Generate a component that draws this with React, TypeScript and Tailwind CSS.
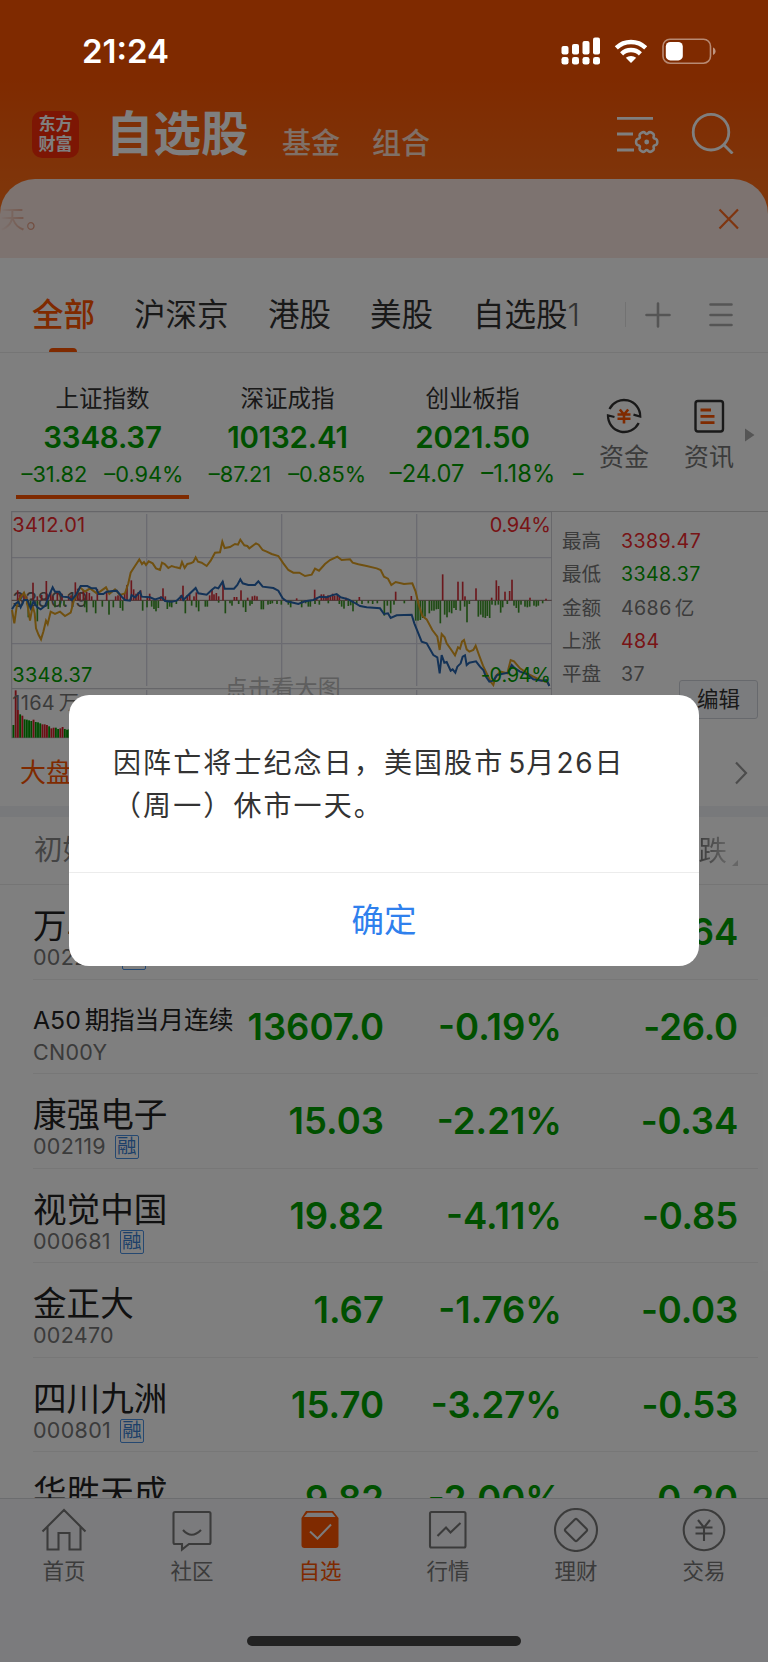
import React from 'react';

const indices = [
  { name: '上证指数', value: '3348.37', diff: '–31.82', pct: '–0.94%', active: true },
  { name: '深证成指', value: '10132.41', diff: '–87.21', pct: '–0.85%', active: false },
  { name: '创业板指', value: '2021.50', diff: '–24.07', pct: '–1.18%', active: false, large: true }
];

const stats = [
  { label: '最高', value: '3389.47', color: 'text-[#f0282d]' },
  { label: '最低', value: '3348.37', color: 'text-[#00a000]' },
  { label: '金额', value: '4686', unit: '亿', color: 'text-[#777777]' },
  { label: '上涨', value: '484', color: 'text-[#f0282d]' },
  { label: '平盘', value: '37', color: 'text-[#777777]' }
];

const stocks = [
  { name: '万马股份', code: '002276', margin: true, price: '', pct: '', change: '-0.64' },
  { name: 'A50', suffix: '期指当月连续', code: 'CN00Y', margin: false, price: '13607.0', pct: '-0.19%', change: '-26.0' },
  { name: '康强电子', code: '002119', margin: true, price: '15.03', pct: '-2.21%', change: '-0.34' },
  { name: '视觉中国', code: '000681', margin: true, price: '19.82', pct: '-4.11%', change: '-0.85' },
  { name: '金正大', code: '002470', margin: false, price: '1.67', pct: '-1.76%', change: '-0.03' },
  { name: '四川九洲', code: '000801', margin: true, price: '15.70', pct: '-3.27%', change: '-0.53' },
  { name: '华胜天成', code: '600410', margin: true, price: '9.82', pct: '-2.00%', change: '-0.20' }
];

// [x, height] pairs, drawn up (rises) or down (falls) from the zero line
const rises = [
  [53, 30], [60, 18], [72, 22], [80, 12], [99, 53], [112, 12], [125, 16], [139, 58], [152, 25], [159, 12], [172, 22], [186, 20],
  [206, 14], [213, 15], [226, 54], [233, 35], [240, 22], [250, 30], [260, 25], [268, 22], [275, 12], [292, 34], [320, 26], [347, 12],
  [354, 15], [361, 15], [374, 20], [381, 46], [394, 60], [401, 33], [408, 20], [415, 25], [422, 30], [442, 8], [449, 20], [482, 12],
  [489, 36], [496, 12], [542, 15], [549, 44], [562, 16], [569, 18], [582, 12], [589, 24], [629, 15], [636, 32], [642, 18], [649, 22],
  [656, 12], [669, 57], [703, 10], [710, 10], [723, 30], [743, 8], [757, 12], [764, 14], [771, 12], [890, 6], [944, 32], [950, 8],
  [964, 18], [971, 18], [978, 12], [984, 15], [991, 12], [998, 20], [1004, 14], [1012, 18], [1018, 12], [1038, 8], [1078, 10],
  [1187, 26], [1234, 13], [1328, 78], [1374, 56], [1388, 56], [1395, 12], [1428, 36], [1475, 8], [1489, 60], [1496, 43], [1515, 26],
  [1529, 28], [1536, 62], [1590, 8], [1638, 5]
];

const falls = [
  [85, 50], [92, 25], [112, 62], [145, 25], [165, 20], [180, 20], [192, 15], [254, 20], [260, 35], [280, 20], [287, 38], [307, 18],
  [327, 42], [340, 20], [361, 22], [368, 30], [428, 30], [441, 20], [455, 18], [462, 25], [468, 32], [475, 22], [502, 25], [509, 18],
  [515, 20], [529, 10], [556, 38], [575, 15], [589, 20], [596, 32], [616, 18], [622, 18], [656, 6], [676, 38], [690, 8], [696, 15],
  [716, 10], [730, 20], [737, 34], [750, 15], [756, 10], [784, 26], [790, 26], [804, 12], [811, 10], [817, 8], [831, 10], [844, 12],
  [865, 12], [872, 20], [905, 20], [917, 8], [925, 18], [931, 18], [945, 10], [958, 12], [985, 8], [1018, 10], [1025, 18], [1032, 24],
  [1045, 16], [1052, 14], [1059, 32], [1070, 10], [1086, 10], [1105, 8], [1118, 10], [1132, 8], [1153, 45], [1162, 15], [1172, 38],
  [1182, 12], [1213, 8], [1247, 60], [1254, 60], [1261, 58], [1268, 52], [1275, 48], [1288, 38], [1295, 30], [1302, 30], [1309, 26],
  [1315, 25], [1321, 68], [1334, 42], [1341, 50], [1348, 35], [1355, 38], [1362, 22], [1368, 28], [1381, 30], [1394, 18], [1401, 65],
  [1408, 10], [1435, 48], [1442, 42], [1449, 50], [1456, 52], [1462, 46], [1469, 52], [1476, 12], [1486, 14], [1495, 12], [1502, 36],
  [1508, 20], [1522, 10], [1542, 15], [1549, 22], [1556, 36], [1563, 12], [1575, 18], [1582, 20], [1589, 18], [1602, 15], [1609, 18],
  [1615, 15], [1628, 8]
];

// [height, up] pairs
const volumes = [
  [38, 0], [142, 1], [83, 1], [70, 0], [66, 1], [55, 0], [54, 0], [52, 0], [50, 0], [54, 1], [47, 0], [46, 0], [43, 0],
  [40, 1], [40, 1], [38, 1], [34, 0], [28, 1], [30, 1], [30, 0], [26, 0], [28, 1], [32, 1], [26, 0], [24, 0], [25, 0], [24, 1], [22, 0]
];

const yellowLine =
  '36,330 43,370 50,320 60,295 72,278 80,300 90,362 98,318 104,340 108,385 116,405 123,418 130,395 138,362 143,372 152,335 165,342 180,335 195,348 212,338 222,300 240,262 255,275 270,265 290,280 300,275 318,262 328,282 345,268 360,285 375,280 385,250 392,218 405,198 418,178 426,192 432,186 438,195 446,184 458,190 468,205 480,210 486,188 494,192 505,204 515,198 528,202 540,205 546,186 554,204 562,192 572,190 580,186 587,172 594,185 605,188 620,198 632,182 645,158 660,157 667,125 674,144 690,141 705,132 714,134 721,119 733,136 742,138 748,145 768,130 776,134 788,150 800,155 815,162 835,168 850,190 865,210 880,218 898,218 915,228 935,224 945,206 957,212 975,192 990,180 1012,170 1025,180 1050,178 1058,188 1075,193 1100,198 1130,205 1142,210 1152,230 1164,236 1174,255 1187,246 1212,252 1237,250 1247,275 1255,310 1267,348 1280,358 1297,390 1312,410 1319,450 1325,402 1334,412 1340,430 1352,447 1365,466 1374,442 1380,446 1386,425 1392,420 1400,448 1408,455 1420,450 1427,437 1437,465 1449,497 1460,520 1472,545 1480,555 1487,528 1502,515 1522,520 1532,480 1542,484 1560,505 1590,525 1620,540 1640,545 1648,555';

const blueLine =
  '36,328 46,312 55,305 62,322 72,300 82,300 92,325 100,305 112,322 122,328 135,318 145,292 158,262 165,275 178,275 188,290 205,292 215,300 228,285 242,258 262,258 275,265 288,265 296,282 310,282 320,275 350,272 365,290 375,300 390,302 395,285 405,292 420,275 425,290 450,292 465,298 485,292 495,303 515,305 530,302 545,288 550,300 565,285 587,264 595,280 620,284 635,270 645,262 655,265 668,245 674,266 702,266 712,255 721,238 728,250 745,255 765,255 775,244 788,260 820,264 835,272 848,295 860,304 880,308 895,312 915,304 940,300 960,290 980,292 995,286 1010,282 1022,292 1045,298 1060,306 1080,318 1100,322 1140,325 1152,342 1164,340 1172,354 1190,346 1235,344 1243,370 1265,425 1280,430 1300,465 1312,472 1319,520 1325,465 1333,488 1340,486 1352,512 1358,508 1366,518 1372,500 1382,490 1388,470 1395,466 1400,495 1408,488 1428,484 1440,500 1450,510 1458,530 1468,545 1480,542 1492,525 1505,522 1525,518 1535,495 1545,505 1560,515 1580,522 1600,538 1625,542 1640,540 1648,558';

// closed six-lobed outline, smoothed through the midpoints of its control polygon
function gearPath(cx: number, cy: number) {
  const pts: number[][] = [];
  for (let i = 0; i < 6; i++) {
    [[-15, 11], [15, 11], [30, 7.2]].forEach(([deg, r]) => {
      const a = ((i * 60 + deg) * Math.PI) / 180;
      pts.push([cx + r * Math.cos(a), cy + r * Math.sin(a)]);
    });
  }
  const mid = (i: number) => {
    const a = pts[i % pts.length];
    const b = pts[(i + 1) % pts.length];
    return `${((a[0] + b[0]) / 2).toFixed(2)} ${((a[1] + b[1]) / 2).toFixed(2)}`;
  };
  return `M${mid(pts.length - 1)}` + pts.map((p, i) => `Q${p[0].toFixed(2)} ${p[1].toFixed(2)} ${mid(i)}`).join('') + 'z';
}

function StatusBar() {
  return (
    <div className="absolute inset-x-0 top-0 z-20 flex h-[102px] items-center justify-between pl-[82px] pr-[52px] text-white">
      <span className="text-[33px] font-semibold leading-none">21:24</span>
      <svg className="h-8 w-[156px]" viewBox="0 0 156 32">
        <g fill="#fff">
          <rect x="1.5" y="11" width="7" height="8.5" rx="2" />
          <rect x="12" y="9" width="7" height="10.5" rx="2" />
          <rect x="22.5" y="6" width="7" height="13.5" rx="2" />
          <rect x="33" y="2.5" width="7" height="17" rx="2" />
          <rect x="1.5" y="22" width="7" height="7.5" rx="2.3" />
          <rect x="12" y="22" width="7" height="7.5" rx="2.3" />
          <rect x="22.5" y="22" width="7" height="7.5" rx="2.3" />
          <rect x="33" y="22" width="7" height="7.5" rx="2.3" />
          <path d="M71 28l-5.2-5.2a8 8 0 0 1 10.4 0z" />
        </g>
        <g fill="none" stroke="#fff" strokeWidth="4.4">
          <path d="M56.3 12.9a21.3 21.3 0 0 1 29.4 0" />
          <path d="M61.6 18.8a13.5 13.5 0 0 1 18.8 0" />
        </g>
        <rect x="103" y="4.2" width="47.5" height="24" rx="7" fill="none" stroke="#fff" strokeOpacity="0.45" strokeWidth="1.6" />
        <rect x="105.8" y="7" width="17" height="18.4" rx="4.5" fill="#fff" />
        <path d="M153 12.5c3.4 1.2 3.4 6.2 0 7.4z" fill="#fff" fillOpacity="0.5" />
      </svg>
    </div>
  );
}

function Header() {
  return (
    <header className="flex h-[214px] items-start bg-linear-to-b from-[#fe5400] from-35% to-[#fe7018] pl-8 pt-[110px] text-white">
      <div className="mt-px flex h-[47px] w-[47px] flex-col items-center justify-center rounded-[10px] bg-[#fa2c08] text-[17px] font-bold leading-[19.5px]">
        <span>东方</span>
        <span>财富</span>
      </div>
      <h1 className="ml-[27px] w-[150px] whitespace-nowrap text-[47.5px] font-bold leading-[48px]">自选股</h1>
      <span className="ml-[26px] mt-[18px] text-[29px] font-medium leading-8 text-white/80">基金</span>
      <span className="ml-[32px] mt-[18px] text-[29px] font-medium leading-8 text-white/80">组合</span>
      <svg className="ml-[187px] h-[44px] w-[120px]" viewBox="0 0 120 44" fill="none" stroke="#fff" strokeWidth="2.8">
        <path d="M0 8.3h36M0 24h16M0 40h17" />
        <path d={gearPath(29.7, 32)} strokeWidth="2.5" />
        <circle cx="29.7" cy="32" r="2.4" fill="#fff" stroke="none" />
        <circle cx="94" cy="22.2" r="17.8" />
        <path d="M106.500 34.5l9 9" />
      </svg>
    </header>
  );
}

function Tabs() {
  return (
    <nav className="flex h-[95px] items-center border-b border-[#ebebeb] pt-[19px] pl-[32px] text-[31.5px] leading-none text-[#333]">
      <div className="relative flex h-full w-[63px] items-center font-medium text-[#fe5400]">
        全部
        <div className="absolute bottom-0 left-[17px] h-1 w-7 rounded-t bg-[#fe5400]"></div>
      </div>
      <span className="ml-[39px] w-[94px] whitespace-nowrap">沪深京</span>
      <span className="ml-[40px] w-[63px] whitespace-nowrap">港股</span>
      <span className="ml-[39px] w-[63px] whitespace-nowrap">美股</span>
      <span className="ml-[40px] w-[112px] whitespace-nowrap">自选股<span className="text-[#666] font-light">1</span></span>
      <div className="ml-[40px] h-[25px] w-px bg-[#e4e4e4]"></div>
      <svg className="ml-[19px] h-7 w-[90px]" viewBox="0 0 90 28" fill="none" stroke="#aaa" strokeWidth="2.6" strokeLinecap="round">
        <path d="M1.5 14h23M13 2.5v23M65.5 3.5h21M65.5 14h21M65.5 24h21" />
      </svg>
    </nav>
  );
}

function IndexStrip() {
  return (
    <section className="flex h-[158px]">
      <div className="flex w-[586px] overflow-hidden pl-[10px]">
        {indices.map((item) => (
          <div key={item.name} className="relative flex w-[185px] shrink-0 flex-col items-center pt-[34px]">
            <span className="text-[23.5px] leading-6 text-[#333]">{item.name}</span>
            <span className="mt-[12px] text-[29.5px] font-semibold leading-7 tracking-[-0.2px] text-[#00a000]">{item.value}</span>
            <div
              className={`mt-[11px] flex gap-[17px] whitespace-nowrap leading-6 text-[#00a000] ${item.large ? 'text-[23.7px]' : 'text-[21.8px]'}`}
            >
              <span>{item.diff}</span>
              <span>{item.pct}</span>
            </div>
            {item.active && <div className="absolute left-[6px] top-[142px] h-1 w-[173px] bg-[#fe5400]"></div>}
          </div>
        ))}
        <span className="ml-[8px] mt-[109px] text-[21px] leading-6 text-[#00a000]">–</span>
      </div>
      <div className="flex pt-[42px] text-[25px] leading-7 text-[#777]">
        <div className="ml-[13px] flex w-[50px] flex-col items-center whitespace-nowrap">
          <svg className="h-[42px] w-[42px]" viewBox="0 0 42 42" fill="none" stroke="#333" strokeWidth="2.3">
            <path d="M6.5 14A16.2 16.2 0 0 1 37.2 21.5L30.5 19.6" />
            <path d="M35.7 28A16.2 16.2 0 0 1 5 20.5L11.5 22" />
            <g stroke="#fe5400" strokeWidth="2.6">
              <path d="M16.8 14.5l4.2 5 4.2-5M14.5 19.5h13M14.5 23.8h13M21 19.5v9" />
            </g>
          </svg>
          <span className="mt-[6px]">资金</span>
        </div>
        <div className="ml-[35px] flex w-[50px] flex-col items-center whitespace-nowrap">
          <svg className="h-[42px] w-[42px]" viewBox="0 0 42 42" fill="none" stroke="#333" strokeWidth="2.4">
            <rect x="7.5" y="6" width="27.5" height="30.5" rx="2.5" />
            <path d="M12.5 15h10.5M12.5 21.3h14M12.5 27.7h14" stroke="#fe5400" strokeWidth="2.8" />
          </svg>
          <span className="mt-[6px]">资讯</span>
        </div>
        <svg className="ml-[11px] mt-[33px] h-[14px] w-[10px]" viewBox="0 0 10 14" fill="#aaa">
          <path d="M0 0.5l9.5 6.5-9.5 6.5z" />
        </svg>
      </div>
    </section>
  );
}

function Chart() {
  return (
    <section className="flex h-[228px]">
      <svg className="ml-[11px] h-[228px] w-[541px] shrink-0" viewBox="33 33 1623 684">
        <g fill="none" stroke="#d6d6e2" strokeWidth="4">
          <path d="M35 173H1655M35 431H1655M440 42V558M845 42V558M1250 42V558M440 570V713M845 570V713M1250 570V713" />
        </g>
        <path d="M35 35H1655V713H35zM35 566H1655" fill="none" stroke="#cdcdd3" strokeWidth="3.5" />
        <g fontSize="60" letterSpacing="0.8">
          <text x="37" y="321" fill="#666">3380.19</text>
          <text x="674" y="587" fill="#bdbdbd" fontSize="69">点击看大图</text>
        </g>
        <path d="M35 301H1655" stroke="#8a6a6a" strokeWidth="3" />
        {rises.map(([x, h]) => (
          <rect key={x} x={x - 2.5} y={301 - h} width="5" height={h} fill="#d6303a" />
        ))}
        {falls.map(([x, h]) => (
          <rect key={x} x={x - 2.5} y="302" width="5" height={h} fill="#3c9628" />
        ))}
        {volumes.map(([h, up], i) => (
          <rect key={i} x={37.5 + i * 6.7} y={713 - h} width="5.6" height={h} fill={up ? '#d6202a' : '#009600'} />
        ))}
        <polyline points={yellowLine} fill="none" stroke="#e0a020" strokeWidth="6" />
        <polyline points={blueLine} fill="none" stroke="#2664ae" strokeWidth="6" />
        <g fontSize="60" letterSpacing="0.8">
          <text x="37" y="97" fill="#f0282d">3412.01</text>
          <text x="1652" y="97" fill="#f0282d" textAnchor="end" letterSpacing="-1">0.94%</text>
          <text x="37" y="545" fill="#00a000">3348.37</text>
          <text x="1652" y="545" fill="#00a000" textAnchor="end" letterSpacing="-1">-0.94%</text>
          <text x="37" y="629" fill="#777">1164</text>
          <text x="176" y="629" fill="#777">万</text>
        </g>
      </svg>
      <div className="relative flex-1 border-t border-[#d2d2d2] pt-[13px] pl-[10px]">
        {stats.map((item) => (
          <div key={item.label} className="flex h-[33.4px] items-center whitespace-nowrap text-[19.6px] leading-none">
            <span className="w-[59px] text-[#777]">{item.label}</span>
            <span className={`tracking-[0.4px] ${item.color}`}>{item.value}</span>
            {item.unit && <span className="ml-[3px] text-[#777]">{item.unit}</span>}
          </div>
        ))}
        <button className="absolute left-[127px] top-[168px] flex h-[39px] w-[79px] items-center justify-center rounded-[3px] border border-[#cfd3da] bg-[#f7f9fd] text-[21.5px] leading-none text-[#333]">
          编辑
        </button>
      </div>
    </section>
  );
}

function StockRow({ stock }: { stock: (typeof stocks)[number] }) {
  return (
    <div className="ml-[33px] mr-[10px] flex h-[94.5px] shrink-0 border-b border-[#eee]">
      <div className="w-[200px] shrink-0 pt-[23px]">
        <div className={`flex h-9 items-center whitespace-nowrap leading-none text-[#222] ${stock.suffix ? 'gap-[4px] text-[24.8px]' : 'text-[33.6px]'}`}>
          <span>{stock.name}</span>
          {stock.suffix && <span>{stock.suffix}</span>}
        </div>
        <div className="mt-[2px] flex h-6 items-center gap-[9px] text-[21.5px] leading-none text-[#777]">
          <span className="tracking-[0.3px]">{stock.code}</span>
          {stock.margin && (
            <span className="flex h-[24px] w-6 items-center justify-center rounded-[2px] border border-[#4a90e2] text-[19.5px] text-[#3a80d2]">融</span>
          )}
        </div>
      </div>
      <div className="flex h-[95px] items-center text-right text-[36.5px] font-semibold leading-none text-[#00a000]">
        <span className="w-[151px]">{stock.price}</span>
        <span className="w-[178px]">{stock.pct}</span>
        <span className="w-[176px] tracking-[-0.2px]">{stock.change}</span>
      </div>
    </div>
  );
}

function Watchlist() {
  return (
    <section>
      <div className="flex h-[67px] items-center justify-between pl-[20px] pr-[20px] text-[26px] leading-none text-[#fe5400]">
        大盘
        <svg className="h-6 w-[13px]" viewBox="0 0 13 24" fill="none" stroke="#999" strokeWidth="2.2">
          <path d="M1 1.5l10 10.5-10 10.5" />
        </svg>
      </div>
      <div className="h-[11px] bg-[#f0f2f7]"></div>
      <div className="flex h-[68px] items-center justify-between border-b border-[#eaeaea] pl-[34px] pr-[30px] text-[28.5px] leading-none text-[#888]">
        初始
        <div className="flex items-end">
          <span className="bg-linear-to-r from-[#777] from-50% to-[#ccc] bg-clip-text leading-[34px] text-transparent">涨跌</span>
          <svg className="mb-[2px] ml-[5px] h-1.5 w-1.5" viewBox="0 0 6 6" fill="#ccc">
            <path d="M6 0v6H0z" />
          </svg>
        </div>
      </div>
      {stocks.map((stock) => (
        <StockRow key={stock.code} stock={stock} />
      ))}
    </section>
  );
}

const navItems = [
  {
    label: '首页',
    icon: <path d="M1.5 23.5L23 2l21.5 21.5M6.5 18.5V41.5H17.5V25H28.5V41.5H39.5V18.5" />
  },
  {
    label: '社区',
    icon: (
      <>
        <path d="M6 4H40a1.5 1.5 0 0 1 1.5 1.5V34.5a1.5 1.5 0 0 1-1.5 1.5H20L13 41.5V36H6a1.5 1.5 0 0 1-1.5-1.5V5.5A1.5 1.5 0 0 1 6 4z" />
        <path d="M14 22q8.5 9.5 18 0" />
      </>
    )
  },
  {
    label: '自选',
    active: true,
    icon: (
      <>
        <path d="M9 3h27l5.5 7v27a3 3 0 0 1-3 3h-31a3 3 0 0 1-3-3V10z" fill="#fe5400" stroke="none" />
        <path d="M10.5 4.7h24.5l3.5 4.3H7z" fill="#f7f7fa" stroke="none" />
        <path d="M13 23.5l7.5 7 13.5-14" stroke="#f7f7fa" strokeWidth="2" />
      </>
    )
  },
  {
    label: '行情',
    icon: (
      <>
        <rect x="5" y="4" width="35.5" height="35.5" rx="1.5" />
        <path d="M12.5 28l8.5-8.5 4.5 5L35.5 15" />
      </>
    )
  },
  {
    label: '理财',
    icon: (
      <>
        <circle cx="23" cy="22" r="21" />
        <path d="M21.8 11.5a1.7 1.7 0 0 1 2.4 0l9.3 9.3a1.7 1.7 0 0 1 0 2.4l-9.3 9.3a1.7 1.7 0 0 1-2.4 0l-9.3-9.3a1.7 1.7 0 0 1 0-2.4z" />
      </>
    )
  },
  {
    label: '交易',
    icon: (
      <>
        <circle cx="23" cy="22" r="20.3" />
        <path d="M17 12l6 7.5 6-7.5M14.5 19.5h17M14.5 25.5h17M23 19.5v13.5" />
      </>
    )
  }
];

function BottomNav() {
  return (
    <footer className="absolute inset-x-0 bottom-px h-[164px] border-t border-[#d8dade] bg-[#f7f7fa]">
      <div className="grid grid-cols-6 pt-[9px]">
        {navItems.map((item) => (
          <div key={item.label} className={`flex flex-col items-center ${item.active ? 'text-[#fe5400]' : 'text-[#777]'}`}>
            <svg className="h-11 w-[46px]" viewBox="0 0 46 44" fill="none" stroke="#777" strokeWidth="2.1">
              {item.icon}
            </svg>
            <span className="mt-[7px] text-[21.5px] leading-6">{item.label}</span>
          </div>
        ))}
      </div>
      <div className="mx-auto mt-[53px] h-2.5 w-[274px] rounded-full bg-[#444]"></div>
    </footer>
  );
}

export default function App() {
  return (
    <div className="relative h-[1663px] w-[768px] overflow-hidden bg-white font-[Inter,'Noto_Sans_CJK_SC',sans-serif]">
      <div className="absolute inset-x-0 top-0 h-[1662px] overflow-hidden">
        <Header />
        <div className="relative -mt-[35px] flex h-[79px] items-center justify-between rounded-t-[35px] bg-[#fae6e0] pr-[28px] text-[25px] leading-none text-[#fe5400]">
          <span className="bg-linear-to-r from-transparent to-[#d87048] bg-clip-text leading-8 tracking-[1px] text-transparent">天。</span>
          <svg className="h-[22px] w-[22px]" viewBox="0 0 22 22" fill="none" stroke="#fe6a1e" strokeWidth="2.2">
            <path d="M1.5 1.5l18.5 19M20 1.5L1.5 20.5" />
          </svg>
        </div>
        <Tabs />
        <IndexStrip />
        <Chart />
        <Watchlist />
      </div>
      <BottomNav />

      <div className="absolute inset-x-0 top-0 z-10 h-[1662px] bg-black/50"></div>
      <StatusBar />

      <div className="absolute left-[69px] top-[695px] z-20 flex h-[271px] w-[630px] flex-col rounded-[20px] bg-white">
        <p className="h-[177px] whitespace-pre pl-[44px] pt-[47px] text-[28px] leading-[43px] tracking-[2.1px] text-[#333]">
          因阵亡将士纪念日，美国股市<span className="ml-[4px] tracking-[1px]">5</span>月<span className="tracking-[1.8px]">26</span>日{'\n'}（周一）休市一天。
        </p>
        <button className="flex-1 border-t border-[#ececec] pt-[3px] text-[32.5px] leading-none text-[#2f80ed]">确定</button>
      </div>
    </div>
  );
}
